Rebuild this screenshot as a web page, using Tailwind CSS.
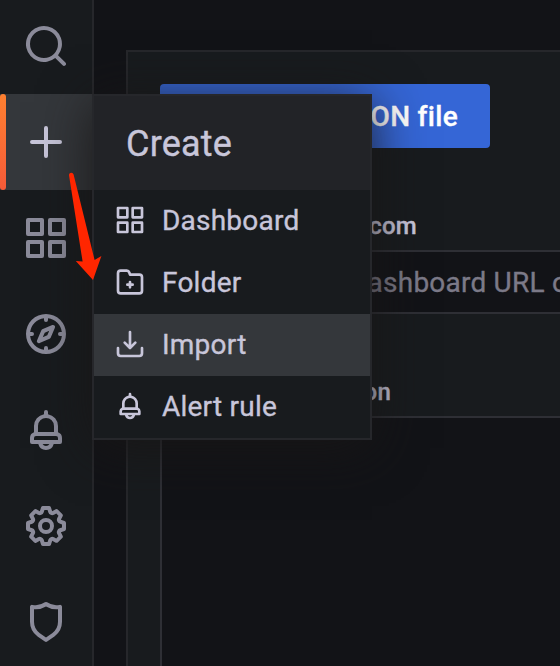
<!DOCTYPE html>
<html lang="en">
<head>
<meta charset="utf-8">
<title>Import dashboard</title>
<script src="https://cdn.jsdelivr.net/npm/@tailwindcss/browser@4"></script>
</head>
<body class="relative flex h-[666px] w-[560px] overflow-hidden bg-[#121317] font-['Roboto',sans-serif] tracking-[0.014em] text-[#c8c6da] [-webkit-text-stroke:0.35px_currentColor]">

  <!-- Side navigation -->
  <nav class="flex h-full w-[94px] shrink-0 flex-col overflow-hidden border-r-2 border-[#26272b] bg-[#181b1e] text-[#8b8b9a]">
    <a class="-mt-0.5 flex h-24 shrink-0 items-center justify-center"><svg class="size-12" viewBox="0 0 24 24" fill="currentColor"><path d="M21.71,20.29,18,16.61A9,9,0,1,0,16.61,18l3.68,3.68a1,1,0,0,0,1.42,0A1,1,0,0,0,21.71,20.29ZM11,18a7,7,0,1,1,7-7A7,7,0,0,1,11,18Z"/></svg></a>
    <a class="relative flex h-24 shrink-0 items-center justify-center bg-[#34373b] text-[#c8c6da]"><span class="absolute inset-y-0 left-0 w-1.5 rounded-[3px] bg-linear-to-b from-[#ff8030] to-[#f55a38]"></span><svg class="size-12" viewBox="0 0 24 24" fill="currentColor"><path d="M19,11H13V5a1,1,0,0,0-2,0v6H5a1,1,0,0,0,0,2h6v6a1,1,0,0,0,2,0V13h6a1,1,0,0,0,0-2Z"/></svg></a>
    <a class="flex h-24 shrink-0 items-center justify-center"><svg class="size-12" viewBox="0 0 24 24" fill="currentColor"><path d="M10,13H3a1,1,0,0,0-1,1v7a1,1,0,0,0,1,1h7a1,1,0,0,0,1-1V14A1,1,0,0,0,10,13ZM9,20H4V15H9ZM21,2H14a1,1,0,0,0-1,1v7a1,1,0,0,0,1,1h7a1,1,0,0,0,1-1V3A1,1,0,0,0,21,2ZM20,9H15V4h5Zm1,4H14a1,1,0,0,0-1,1v7a1,1,0,0,0,1,1h7a1,1,0,0,0,1-1V14A1,1,0,0,0,21,13Zm-1,7H15V15h5ZM10,2H3A1,1,0,0,0,2,3v7a1,1,0,0,0,1,1h7a1,1,0,0,0,1-1V3A1,1,0,0,0,10,2ZM9,9H4V4H9Z"/></svg></a>
    <a class="flex h-24 shrink-0 items-center justify-center"><svg class="size-12" viewBox="0 0 24 24" fill="currentColor"><path d="M12,2A10,10,0,1,0,22,12,10,10,0,0,0,12,2Zm1,17.93V19a1,1,0,0,0-2,0v.93A8,8,0,0,1,4.07,13H5a1,1,0,0,0,0-2H4.07A8,8,0,0,1,11,4.07V5a1,1,0,0,0,2,0V4.07A8,8,0,0,1,19.93,11H19a1,1,0,0,0,0,2h.93A8,8,0,0,1,13,19.93ZM15.14,7.55l-5,2.12a1,1,0,0,0-.52.52l-2.12,5a1,1,0,0,0,.21,1.1,1,1,0,0,0,.7.3.93.93,0,0,0,.4-.09l5-2.12a1,1,0,0,0,.52-.52l2.12-5a1,1,0,0,0-1.31-1.31Zm-2.49,5.1-2.28,1,1-2.28,2.28-1Z"/></svg></a>
    <a class="flex h-24 shrink-0 items-center justify-center"><svg class="size-12" viewBox="0 0 24 24" fill="currentColor"><path d="M18,13.18V10a6,6,0,0,0-5-5.91V3a1,1,0,0,0-2,0V4.09A6,6,0,0,0,6,10v3.18A3,3,0,0,0,4,16v2a1,1,0,0,0,1,1H8.14a4,4,0,0,0,7.72,0H19a1,1,0,0,0,1-1V16A3,3,0,0,0,18,13.18ZM8,10a4,4,0,0,1,8,0v3H8Zm4,10a2,2,0,0,1-1.72-1h3.44A2,2,0,0,1,12,20Zm6-3H6V16a1,1,0,0,1,1-1H17a1,1,0,0,1,1,1Z"/></svg></a>
    <a class="flex h-24 shrink-0 items-center justify-center"><svg class="size-12" viewBox="0 0 24 24" fill="currentColor"><path d="M21.32,9.55l-1.89-.63.89-1.78A1,1,0,0,0,20.13,6L18,3.87a1,1,0,0,0-1.15-.19l-1.78.89-.63-1.89A1,1,0,0,0,13.5,2h-3a1,1,0,0,0-.95.68L8.92,4.57,7.14,3.68A1,1,0,0,0,6,3.87L3.87,6a1,1,0,0,0-.19,1.15l.89,1.78-1.89.63A1,1,0,0,0,2,10.5v3a1,1,0,0,0,.68.95l1.89.63-.89,1.78A1,1,0,0,0,3.87,18L6,20.13a1,1,0,0,0,1.15.19l1.78-.89.63,1.89a1,1,0,0,0,.95.68h3a1,1,0,0,0,.95-.68l.63-1.89,1.78.89A1,1,0,0,0,18,20.13L20.13,18a1,1,0,0,0,.19-1.15l-.89-1.78,1.89-.63A1,1,0,0,0,22,13.5v-3A1,1,0,0,0,21.32,9.55ZM20,12.78l-1.2.4A2,2,0,0,0,17.64,16l.57,1.14-1.1,1.1L16,17.64a2,2,0,0,0-2.79,1.16l-.4,1.2H11.22l-.4-1.2A2,2,0,0,0,8,17.64l-1.14.57-1.1-1.1L6.36,16A2,2,0,0,0,5.2,13.18L4,12.78V11.22l1.2-.4A2,2,0,0,0,6.36,8L5.79,6.89l1.1-1.1L8,6.36A2,2,0,0,0,10.82,5.2l.4-1.2h1.56l.4,1.2A2,2,0,0,0,16,6.36l1.14-.57,1.1,1.1L17.64,8a2,2,0,0,0,1.16,2.79l1.2.4ZM12,8a4,4,0,1,0,4,4A4,4,0,0,0,12,8Zm0,6a2,2,0,1,1,2-2A2,2,0,0,1,12,14Z"/></svg></a>
    <a class="flex h-[92px] shrink-0 items-start justify-center pt-6"><svg class="size-12" viewBox="0 0 24 24" fill="currentColor"><path d="M19.63,3.65a1,1,0,0,0-.84-.2,8,8,0,0,1-6.22-1.27,1,1,0,0,0-1.14,0A8,8,0,0,1,5.21,3.45a1,1,0,0,0-.84.2A1,1,0,0,0,4,4.43v7.45a9,9,0,0,0,3.77,7.33l3.65,2.6a1,1,0,0,0,1.16,0l3.65-2.6A9,9,0,0,0,20,11.88V4.43A1,1,0,0,0,19.63,3.65ZM18,11.88a7,7,0,0,1-2.93,5.7L12,19.77,8.93,17.58A7,7,0,0,1,6,11.88V5.58a10,10,0,0,0,6-1.39,10,10,0,0,0,6,1.39Z"/></svg></a>
  </nav>

  <!-- Import form -->
  <main class="mt-[50px] ml-8 flex min-w-0 flex-1 flex-col items-start overflow-hidden border-t-2 border-l-2 border-[#26272b] bg-[#181b1e] pt-8 pl-8">
    <button class="flex h-16 w-[330px] shrink-0 items-center justify-end rounded-[4px] bg-[#3566d6] pt-0.5 pr-8 text-[28px] font-medium tracking-[0.011em] whitespace-nowrap text-white">Upload JSON file</button>
    <label class="mt-16 flex h-7 w-[257px] shrink-0 items-center justify-end text-2xl font-medium whitespace-nowrap">Import via grafana.com</label>
    <div class="mt-[10px] flex h-16 w-full shrink-0 items-center overflow-hidden rounded-l-[4px] border-y-2 border-l-2 border-[#2e2f35] bg-[#121317] pt-0.5 pl-[18.5px] text-[28px] whitespace-nowrap text-[#7c7a88]">Grafana.com dashboard URL or id</div>
    <label class="mt-16 flex h-7 w-[231px] shrink-0 items-center justify-end text-2xl font-medium whitespace-nowrap">Import via panel json</label>
    <div class="mt-[10px] w-full flex-1 rounded-tl-[4px] border-t-2 border-l-2 border-[#2e2f35] bg-[#121317]"></div>
  </main>

  <!-- Create flyout -->
  <section class="absolute top-[94px] left-[92px] flex w-[280px] flex-col border-2 border-[#26272b] bg-[#181b1e] text-[28px] shadow-[0_8px_48px_0_rgba(24,22,22,0.9)]">
    <h2 class="flex h-[94px] items-center bg-[#222327] pt-0.5 pl-8 text-4xl">Create</h2>
    <a class="flex h-[62px] items-center gap-4 pl-5"><svg class="mb-0.5 size-8" viewBox="0 0 24 24" fill="currentColor"><path d="M10,13H3a1,1,0,0,0-1,1v7a1,1,0,0,0,1,1h7a1,1,0,0,0,1-1V14A1,1,0,0,0,10,13ZM9,20H4V15H9ZM21,2H14a1,1,0,0,0-1,1v7a1,1,0,0,0,1,1h7a1,1,0,0,0,1-1V3A1,1,0,0,0,21,2ZM20,9H15V4h5Zm1,4H14a1,1,0,0,0-1,1v7a1,1,0,0,0,1,1h7a1,1,0,0,0,1-1V14A1,1,0,0,0,21,13Zm-1,7H15V15h5ZM10,2H3A1,1,0,0,0,2,3v7a1,1,0,0,0,1,1h7a1,1,0,0,0,1-1V3A1,1,0,0,0,10,2ZM9,9H4V4H9Z"/></svg>Dashboard</a>
    <a class="flex h-[62px] items-center gap-4 pl-5"><svg class="mb-0.5 size-8" viewBox="0 0 24 24" fill="currentColor"><path d="M14,13H13V12a1,1,0,0,0-2,0v1H10a1,1,0,0,0,0,2h1v1a1,1,0,0,0,2,0V15h1a1,1,0,0,0,0-2Zm5-7.5H12.72l-.32-1a3,3,0,0,0-2.84-2H5a3,3,0,0,0-3,3v13a3,3,0,0,0,3,3H19a3,3,0,0,0,3-3V8.5A3,3,0,0,0,19,5.5Zm1,13a1,1,0,0,1-1,1H5a1,1,0,0,1-1-1V5.5a1,1,0,0,1,1-1H9.56a1,1,0,0,1,.95.68l.54,1.64A1,1,0,0,0,12,7.5h7a1,1,0,0,1,1,1Z"/></svg>Folder</a>
    <a class="flex h-[62px] items-center gap-4 bg-[#34373b] pl-5"><svg class="mb-0.5 size-8" viewBox="0 0 24 24" fill="currentColor"><path d="M21,14a1,1,0,0,0-1,1v4a1,1,0,0,1-1,1H5a1,1,0,0,1-1-1V15a1,1,0,0,0-2,0v4a3,3,0,0,0,3,3H19a3,3,0,0,0,3-3V15A1,1,0,0,0,21,14Zm-9.71,1.71a1,1,0,0,0,.33.21.94.94,0,0,0,.76,0,1,1,0,0,0,.33-.21l4-4a1,1,0,0,0-1.42-1.42L13,12.59V3a1,1,0,0,0-2,0v9.59l-2.29-2.3a1,1,0,1,0-1.42,1.42Z"/></svg>Import</a>
    <a class="flex h-[62px] items-center gap-4 pl-5"><svg class="mb-0.5 size-8" viewBox="0 0 24 24" fill="currentColor"><path d="M18,13.18V10a6,6,0,0,0-5-5.91V3a1,1,0,0,0-2,0V4.09A6,6,0,0,0,6,10v3.18A3,3,0,0,0,4,16v2a1,1,0,0,0,1,1H8.14a4,4,0,0,0,7.72,0H19a1,1,0,0,0,1-1V16A3,3,0,0,0,18,13.18ZM8,10a4,4,0,0,1,8,0v3H8Zm4,10a2,2,0,0,1-1.72-1h3.44A2,2,0,0,1,12,20Zm6-3H6V16a1,1,0,0,1,1-1H17a1,1,0,0,1,1,1Z"/></svg>Alert rule</a>
  </section>

  <!-- Annotation arrow -->
  <svg class="absolute top-[168px] left-[64px] h-[116px] w-[44px]" viewBox="64 168 44 116" fill="#ff2600"><path d="M69 175.2Q68.8 173 71 172.7Q73 172.5 73.6 174.6L94.6 260L101.4 256L93 280L75.8 261L82.6 261.6Z"/></svg>
</body>
</html>
